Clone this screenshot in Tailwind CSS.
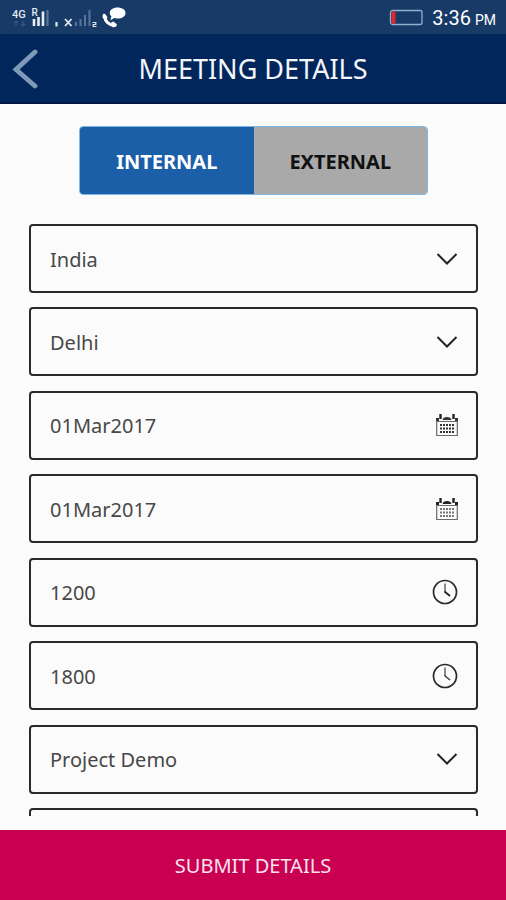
<!DOCTYPE html>
<html lang="en">
<head>
<meta charset="utf-8">
<meta name="viewport" content="width=device-width, initial-scale=1">
<title>Meeting Details</title>
<script src="https://cdn.jsdelivr.net/npm/@tailwindcss/browser@4"></script>
</head>
<body class="bg-[#fbfbfb] font-['Noto_Sans','Open_Sans',sans-serif] text-[#484848]">
<div class="flex h-screen flex-col overflow-hidden">

  <!-- Status bar -->
  <div class="flex h-[34px] shrink-0 items-center justify-between bg-[#173a66] pl-3 pr-[10px] pt-[2px] font-[Roboto,sans-serif] text-white">
    <svg class="h-7 w-[116px]" viewBox="0 0 116 28" fill="none" role="img" aria-label="4G signal, call active">
      <text x="0" y="14" font-size="11" font-weight="500" fill="#e3ebf3">4G</text>
      <text x="19.500" y="12" font-size="10" font-weight="500" fill="#e3ebf3">R</text>
      <path d="M4 22v-5m-2 2 2-2 2 2M11 17v5m-2-2 2 2 2-2" stroke="#3f6288" stroke-width="1"/>
      <path d="M22 22v-7M26.500 22v-9M31 22V7.500" stroke="#e6edf4" stroke-width="2.600"/>
      <path d="M35.500 22V6" stroke="#56769a" stroke-width="2.200"/>
      <path d="M44.500 18v4.500" stroke="#dfe8f1" stroke-width="2.200"/>
      <path d="m53 15 6.500 7m0-7L53 22" stroke="#e6edf4" stroke-width="1.800"/>
      <path d="M64 22v-4M68.500 22v-7M73 22V11M77.500 22V6" stroke="#56769a" stroke-width="2"/>
      <path d="M80.500 18.500h3.300v2h-2.600v2h3.300" stroke="#dfe8f1" stroke-width="1.200"/>
      <path d="M105.500 3.500c4.600 0 8 2.300 8 5.400s-3.400 5.600-8 5.600c-1.200 0-2.200-.1-3.200-.4l-3.900 2.200 1-4c-1-1-1.600-2.100-1.600-3.400 0-3.100 3.300-5.400 7.700-5.400Z" fill="#fff"/>
      <path d="M92.500 12.500c.6 4.700 4.500 8.600 9.800 9" stroke="#fff" stroke-width="3"/>
      <path d="M91 10.300c1-.8 2-.6 2.600.3l2 2.900-2.600 2.300-2.300-2c-.3-1.500-.2-2.700.3-3.500ZM99.300 18.300l2-.8 3 2.200c.8.700.8 1.600 0 2.500-1 1-2.300 1.300-3.800 1Z" fill="#fff"/>
    </svg>
    <div class="flex items-center gap-[9px]">
      <svg class="h-[18px] w-[35px]" viewBox="0 0 35 18" role="img" aria-label="Battery low">
        <rect x="2.500" y="1.500" width="31.500" height="14" rx="2" fill="none" stroke="#8fb0cf" stroke-width="1.300"/>
        <rect x="3.500" y="2.500" width="4" height="12" fill="#e0262f"/>
      </svg>
      <p class="flex items-baseline gap-1"><span class="text-[20px] leading-6">3:36</span><span class="text-[14px]">PM</span></p>
    </div>
  </div>

  <!-- Title bar -->
  <header class="grid h-[70px] shrink-0 grid-cols-[52px_1fr_52px] items-center border-b-2 border-[#021744] bg-[#00265b] pt-[2px]">
    <button type="button" aria-label="Back" class="flex h-full items-center justify-center">
      <svg class="h-10 w-7" viewBox="0 0 28 40" fill="none" stroke="#7f9ab8" stroke-width="4.800" stroke-linecap="round"><path d="M23 3 4 20.500 23 37"/></svg>
    </button>
    <h1 class="whitespace-nowrap text-center text-[27px] leading-8 text-[#f4f6fa]">MEETING DETAILS</h1>
  </header>

  <main class="flex min-h-0 flex-1 flex-col pb-[14px] pl-[29px] pr-7 pt-[22px]">
    <!-- Meeting type -->
    <div class="mx-[50px] mb-[29px] grid h-[69px] shrink-0 grid-cols-2 overflow-hidden rounded-[4px] border border-[#7db8e4] text-[20px] font-bold">
      <button type="button" aria-pressed="true" class="bg-[#1a5fa8] pt-[2px] text-white">INTERNAL</button>
      <button type="button" aria-pressed="false" class="bg-[#a9a9a9] pt-[2px] text-[#111]">EXTERNAL</button>
    </div>

    <!-- Fields, clipped where the list scrolls under the footer -->
    <form id="meeting" class="min-h-0 flex-1 overflow-hidden text-[20px]">
      <div class="flex min-h-[653px] flex-col justify-between">
        <div class="grid h-[69px]">
          <select id="country" aria-label="Country" class="col-start-1 row-start-1 appearance-none rounded-[4px] border-2 border-[#2a2a2a] px-[19px] pt-[2px]"><option>India</option></select>
          <svg class="pointer-events-none col-start-1 row-start-1 mr-5 h-4 w-[22px] self-center justify-self-end" viewBox="0 0 22 16" fill="none" stroke="#222" stroke-width="2"><path d="m1.500 3 9.500 9.500L20.500 3"/></svg>
        </div>
        <div class="grid h-[69px]">
          <select id="city" aria-label="City" class="col-start-1 row-start-1 appearance-none rounded-[4px] border-2 border-[#2a2a2a] px-[19px] pt-[2px]"><option>Delhi</option></select>
          <svg class="pointer-events-none col-start-1 row-start-1 mr-5 h-4 w-[22px] self-center justify-self-end" viewBox="0 0 22 16" fill="none" stroke="#222" stroke-width="2"><path d="m1.500 3 9.500 9.500L20.500 3"/></svg>
        </div>
        <div class="grid h-[69px]">
          <input id="from-date" aria-label="Start date" type="text" value="01Mar2017" class="col-start-1 row-start-1 rounded-[4px] border-2 border-[#2a2a2a] px-[19px] pt-[2px]">
          <svg class="pointer-events-none col-start-1 row-start-1 mr-5 h-6 w-[22px] self-center justify-self-end" viewBox="0 0 22 24" fill="none"><path d="M.7 6v16.500h20.600V6M.7 8.500h20.600" stroke="#6a6a6a" stroke-width="1.200"/><path d="M0 5h3v3H0zM19 5h3v3h-3zM6.500 7c.3-2 2-3 4.500-3s4.200 1 4.500 3Z" fill="#333"/><path d="M4.500 1v5M17.500 1v5" stroke="#222" stroke-width="2.400"/><path d="M4 12h14M4 15.500h14M4 19h14" stroke="#333" stroke-width="2" stroke-dasharray="2 1"/></svg>
        </div>
        <div class="grid h-[69px]">
          <input id="to-date" aria-label="End date" type="text" value="01Mar2017" class="col-start-1 row-start-1 rounded-[4px] border-2 border-[#2a2a2a] px-[19px] pt-[2px]">
          <svg class="pointer-events-none col-start-1 row-start-1 mr-5 h-6 w-[22px] self-center justify-self-end" viewBox="0 0 22 24" fill="none"><path d="M.7 6v16.500h20.600V6M.7 8.500h20.600" stroke="#6a6a6a" stroke-width="1.200"/><path d="M0 5h3v3H0zM19 5h3v3h-3zM6.500 7c.3-2 2-3 4.500-3s4.200 1 4.500 3Z" fill="#222"/><path d="M4.500 1v5M17.500 1v5" stroke="#222" stroke-width="2.400"/><path d="M4 12h14M4 15.500h14M4 19h14" stroke="#777" stroke-width="2" stroke-dasharray="2 1"/></svg>
        </div>
        <div class="grid h-[69px]">
          <input id="from-time" aria-label="Start time" type="text" value="1200" class="col-start-1 row-start-1 rounded-[4px] border-2 border-[#2a2a2a] px-[19px] pt-[2px]">
          <svg class="pointer-events-none col-start-1 row-start-1 mr-5 h-[26px] w-[26px] self-center justify-self-end" viewBox="0 0 26 26" fill="none"><circle cx="13" cy="13" r="11.500" stroke="#2a2a2a" stroke-width="1.700"/><path d="M13 4.500V13" stroke="#777" stroke-width="1.700"/><path d="m12.500 12.500 5.500 4.500" stroke="#222" stroke-width="1.800"/></svg>
        </div>
        <div class="grid h-[69px]">
          <input id="to-time" aria-label="End time" type="text" value="1800" class="col-start-1 row-start-1 rounded-[4px] border-2 border-[#2a2a2a] px-[19px] pt-[2px]">
          <svg class="pointer-events-none col-start-1 row-start-1 mr-5 h-[26px] w-[26px] self-center justify-self-end" viewBox="0 0 26 26" fill="none"><circle cx="13" cy="13" r="11.500" stroke="#2a2a2a" stroke-width="1.700"/><path d="M13 4.500V13" stroke="#777" stroke-width="1.700"/><path d="m12.500 12.500 5.500 4.500" stroke="#444" stroke-width="1.600"/></svg>
        </div>
        <div class="grid h-[69px]">
          <select id="purpose" aria-label="Purpose" class="col-start-1 row-start-1 appearance-none rounded-[4px] border-2 border-[#2a2a2a] px-[19px] pt-[2px]"><option>Project Demo</option></select>
          <svg class="pointer-events-none col-start-1 row-start-1 mr-5 h-4 w-[22px] self-center justify-self-end" viewBox="0 0 22 16" fill="none" stroke="#222" stroke-width="2"><path d="m1.500 3 9.500 9.500L20.500 3"/></svg>
        </div>
        <div class="grid h-[69px]">
          <input id="notes" aria-label="Notes" type="text" class="col-start-1 row-start-1 rounded-[4px] border-2 border-[#2a2a2a] px-[19px] pt-[2px]">
        </div>
      </div>
    </form>
  </main>

  <button type="submit" form="meeting" class="h-[70px] shrink-0 bg-[#c90051] pt-[2px] text-[20px] text-[#fbe3ec]">SUBMIT DETAILS</button>
</div>
</body>
</html>
